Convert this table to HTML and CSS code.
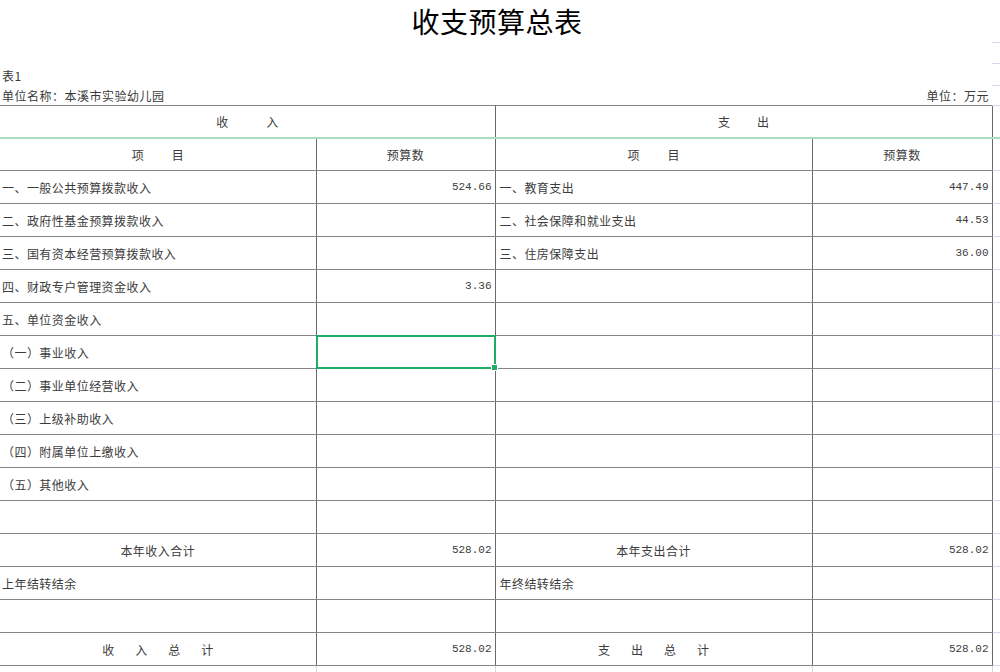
FILE: index.html
```html
<!DOCTYPE html>
<html lang="zh-CN">
<head>
<meta charset="utf-8">
<title>收支预算总表</title>
<link rel="stylesheet" href="styles.css">
</head>
<body>
<div class="sheet">
  <div class="top-row title-row">
    <div class="main title">收支预算总表</div>
    <div class="gutter"></div>
  </div>
  <div class="top-row r21">
    <div class="main"></div>
    <div class="gutter"></div>
  </div>
  <div class="top-row r20">
    <div class="main meta">表1</div>
    <div class="gutter"></div>
  </div>
  <div class="top-row r21">
    <div class="main meta split"><span>单位名称：本溪市实验幼儿园</span><span class="unit">单位：万元</span></div>
    <div class="gutter"></div>
  </div>

  <table class="grid">
    <colgroup>
      <col class="c1"><col class="c2"><col class="c3"><col class="c4"><col class="c5">
    </colgroup>
    <tbody>
      <tr class="head1">
        <td colspan="2" class="center vr"><span class="sp-shou">收入</span></td>
        <td colspan="2" class="center vr"><span class="sp-zhi">支出</span></td>
        <td class="g"></td>
      </tr>
      <tr>
        <td class="center vr"><span class="sp-xm">项目</span></td>
        <td class="center vr">预算数</td>
        <td class="center vr"><span class="sp-xm">项目</span></td>
        <td class="center vr">预算数</td>
        <td class="g"></td>
      </tr>
      <tr>
        <td class="lab vr">一、一般公共预算拨款收入</td>
        <td class="num vr">524.66</td>
        <td class="lab2 vr">一、教育支出</td>
        <td class="num vr">447.49</td>
        <td class="g"></td>
      </tr>
      <tr>
        <td class="lab vr">二、政府性基金预算拨款收入</td>
        <td class="num vr"></td>
        <td class="lab2 vr">二、社会保障和就业支出</td>
        <td class="num vr">44.53</td>
        <td class="g"></td>
      </tr>
      <tr>
        <td class="lab vr">三、国有资本经营预算拨款收入</td>
        <td class="num vr"></td>
        <td class="lab2 vr">三、住房保障支出</td>
        <td class="num vr">36.00</td>
        <td class="g"></td>
      </tr>
      <tr>
        <td class="lab vr">四、财政专户管理资金收入</td>
        <td class="num vr">3.36</td>
        <td class="lab2 vr"></td>
        <td class="num vr"></td>
        <td class="g"></td>
      </tr>
      <tr>
        <td class="lab vr">五、单位资金收入</td>
        <td class="num vr"></td>
        <td class="lab2 vr"></td>
        <td class="num vr"></td>
        <td class="g"></td>
      </tr>
      <tr>
        <td class="lab vr">（一）事业收入</td>
        <td class="num vr sel"><div class="sel-box"><span class="handle"></span></div></td>
        <td class="lab2 vr"></td>
        <td class="num vr"></td>
        <td class="g"></td>
      </tr>
      <tr>
        <td class="lab vr">（二）事业单位经营收入</td>
        <td class="num vr"></td>
        <td class="lab2 vr"></td>
        <td class="num vr"></td>
        <td class="g"></td>
      </tr>
      <tr>
        <td class="lab vr">（三）上级补助收入</td>
        <td class="num vr"></td>
        <td class="lab2 vr"></td>
        <td class="num vr"></td>
        <td class="g"></td>
      </tr>
      <tr>
        <td class="lab vr">（四）附属单位上缴收入</td>
        <td class="num vr"></td>
        <td class="lab2 vr"></td>
        <td class="num vr"></td>
        <td class="g"></td>
      </tr>
      <tr>
        <td class="lab vr">（五）其他收入</td>
        <td class="num vr"></td>
        <td class="lab2 vr"></td>
        <td class="num vr"></td>
        <td class="g"></td>
      </tr>
      <tr>
        <td class="lab vr"></td>
        <td class="num vr"></td>
        <td class="lab2 vr"></td>
        <td class="num vr"></td>
        <td class="g"></td>
      </tr>
      <tr>
        <td class="center vr tight">本年收入合计</td>
        <td class="num vr">528.02</td>
        <td class="center vr tight">本年支出合计</td>
        <td class="num vr">528.02</td>
        <td class="g"></td>
      </tr>
      <tr>
        <td class="lab vr">上年结转结余</td>
        <td class="num vr"></td>
        <td class="lab2 vr">年终结转结余</td>
        <td class="num vr"></td>
        <td class="g"></td>
      </tr>
      <tr>
        <td class="lab vr"></td>
        <td class="num vr"></td>
        <td class="lab2 vr"></td>
        <td class="num vr"></td>
        <td class="g"></td>
      </tr>
      <tr>
        <td class="center vr"><span class="sp-total">收入总计</span></td>
        <td class="num vr">528.02</td>
        <td class="center vr"><span class="sp-total">支出总计</span></td>
        <td class="num vr">528.02</td>
        <td class="g"></td>
      </tr>
      <tr class="extra">
        <td></td><td></td><td></td><td></td><td class="g"></td>
      </tr>
    </tbody>
  </table>
</div>
</body>
</html>
```

FILE: styles.css
```css
html, body {
  margin: 0;
  padding: 0;
  background: #ffffff;
}

body {
  font-family: "Noto Sans CJK SC", "Noto Sans", sans-serif;
  color: #3c3c3c;
  overflow: hidden;
}

.sheet {
  width: 1000px;
}

.top-row {
  display: grid;
  grid-template-columns: 992px 8px;
}

.gutter {
  border-bottom: 1px solid #d3d9ea;
  box-sizing: border-box;
}

.title-row {
  height: 43px;
}

.r21 {
  height: 21px;
}

.r20 {
  height: 20px;
}

.title {
  font-size: 28px;
  line-height: 43px;
  text-align: center;
  color: #000;
  letter-spacing: 0.5px;
  padding-left: 2px;
  font-weight: 400;
}

.meta {
  font-size: 12px;
  letter-spacing: 0.5px;
  line-height: 20px;
  padding-left: 2px;
  padding-top: 2px;
  box-sizing: border-box;
  color: #3a3a3a;
}

.split {
  display: flex;
  justify-content: space-between;
  padding-right: 3px;
}

.grid {
  border-collapse: collapse;
  table-layout: fixed;
  width: 1000px;
  font-size: 12px;
}

.c1 { width: 316px; }
.c2 { width: 179px; }
.c3 { width: 317px; }
.c4 { width: 180px; }
.c5 { width: 8px; }

.grid tr {
  height: 33px;
}

.grid tr.head1 {
  height: 32px;
}

.grid td {
  padding: 0;
  border-top: 1px solid #858585;
  border-bottom: 1px solid #858585;
  white-space: nowrap;
  overflow: visible;
  vertical-align: middle;
  letter-spacing: 0.45px;
  color: #3c3c3c;
}

.grid td.vr {
  border-right: 1px solid #6a6a6a;
}

.grid td.g {
  border-top: 1px solid #d3d9ea;
  border-bottom: 1px solid #d3d9ea;
}

.grid tr.head1 td {
  border-bottom: 2px solid #acdcc0;
}

.center {
  text-align: center;
}

.tight {
  letter-spacing: 0.2px;
}

.lab {
  padding-left: 2px !important;
}

.lab2 {
  padding-left: 4px !important;
}

.num {
  text-align: right;
  padding-right: 3px !important;
  font-family: "Liberation Mono", "DejaVu Sans Mono", monospace;
  font-size: 11px;
  color: #4a4a4a;
  letter-spacing: 0 !important;
}

.sp-shou {
  letter-spacing: 38px;
  padding-left: 38px;
}

.sp-zhi {
  letter-spacing: 27px;
  padding-left: 27px;
}

.sp-xm {
  letter-spacing: 28px;
  padding-left: 28px;
}

.sp-total {
  letter-spacing: 21px;
  padding-left: 21px;
}

.sel {
  position: relative;
}

.sel-box {
  position: absolute;
  left: -1px;
  top: -1px;
  right: -1px;
  bottom: -1px;
  border: 2px solid #1fad64;
}

.handle {
  position: absolute;
  right: -4px;
  bottom: -4px;
  width: 5px;
  height: 5px;
  background: #1fad64;
  border: 1px solid #ffffff;
}

.grid tr.extra td {
  border-top: 1px solid #858585;
  border-bottom: none;
  border-right: 1px solid #d3d9ea;
}

.grid tr.extra td.g {
  border-right: none;
  border-top: 1px solid #d3d9ea;
}
```
